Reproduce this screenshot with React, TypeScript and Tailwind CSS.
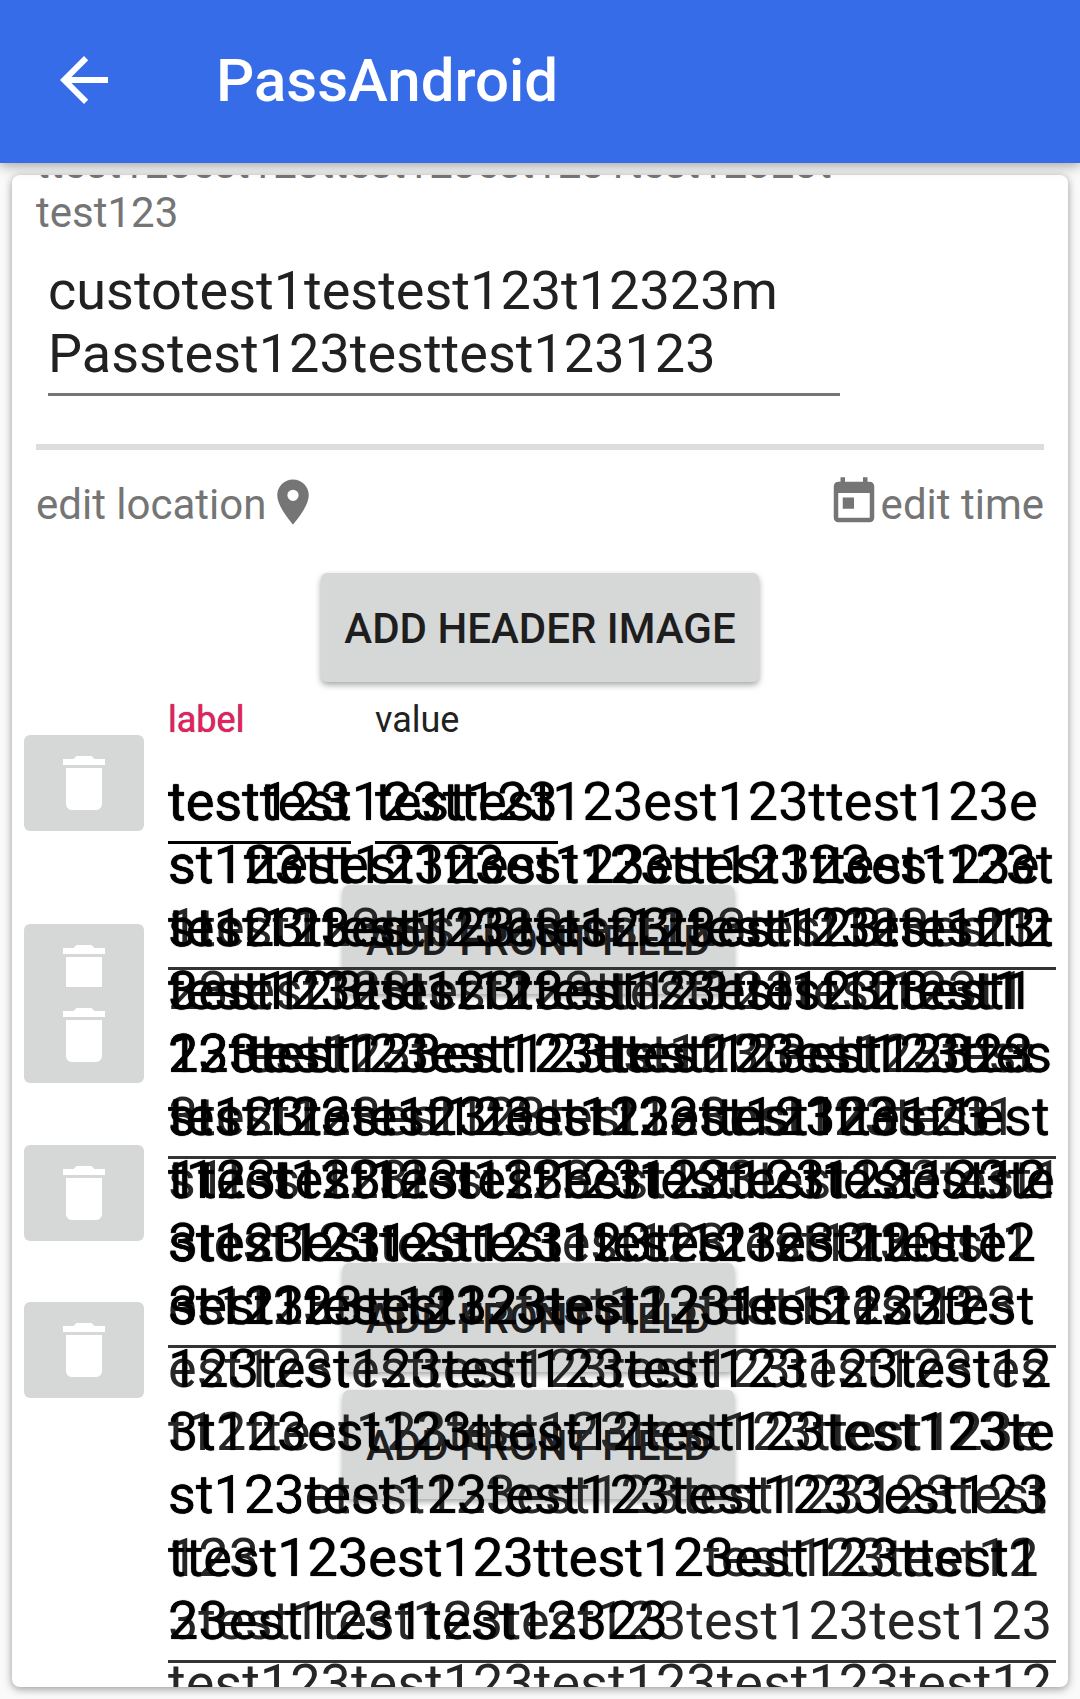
import React from "react";
import { MdArrowBack, MdDelete, MdPlace, MdToday } from "react-icons/md";

const ROBOTO = "font-['Roboto',sans-serif]";

const faintLines = [
  "",
  "",
  "1test123test123test123test123est1",
  "23test123test123ttest123test123t1",
  "23test123test123est123test123test",
  "3test123est123test123est123test1",
  "s1test123test123est123test123test1",
  "stest123test123est123test123test1",
  "est123test123test123test12est123t",
  "est123testtest123test123test123tes",
  "t12ttest123test123test123ttest123e",
  "st123etest123est123test123123test",
  "123t123est123ttest12test123test12",
  "3test1test123test123test123test123",
  "test123test123test123test123test12",
];

const secondLines = [
  "",
  "st1ttest123ttest123est123ttest123e",
  "st123ttest123est123ttest123est123t",
  "test123est123ttest123est123ttest1",
  "123test123est123ttest123est12323",
  "test123test123est123ttest123123",
  "1test123test123est123test123est12",
  "3test123test1231test123est123tte",
  "st123test12323test123test12323",
];

const firstLines = [
  "testtest123ttest123est123ttest123e",
  "st123ttest123est123ttest123est123t",
  "test123est123ttest123est123ttest12",
  "3est123ttest123est123ttest123est1",
  "23ttest123est123ttest123est123ttes",
  "st123test123test123est123ttest1est",
  "t123test123test123test123test123te",
  "st123est123test123test1233ttest12",
  "3est123test123test1231test123test",
  "123test123test123test123123test12",
  "3t123est123ttest12test123test123te",
  "st123test123test123test1233est123",
  "ttest123est123ttest123est123ttest1",
  "23est1231test12323",
];

function Layer({ label, lines, tone }: { label: string; lines: string[]; tone: string }) {
  return (
    <textarea
      aria-label={label}
      rows={15}
      wrap="off"
      spellCheck={false}
      defaultValue={lines.join("\n")}
      className={`col-start-1 row-start-1 block h-[945px] w-full resize-none overflow-hidden whitespace-pre bg-transparent p-0 text-[54px] leading-[63px] outline-none ${tone}`}
    />
  );
}

function DeleteButton({ place }: { place: string }) {
  return (
    <button
      type="button"
      aria-label="Delete field"
      className={`absolute left-3 flex h-24 w-[120px] items-center justify-center rounded-md bg-[#d6d7d7] text-white ${place}`}
    >
      <MdDelete className="size-18" />
    </button>
  );
}

function RaisedButton({ children, place }: { children: React.ReactNode; place: string }) {
  return (
    <button
      type="button"
      className={`h-[109px] rounded-md bg-[#d6d7d7] px-[23px] pt-[2px] text-[42px] leading-[49px] font-medium whitespace-nowrap text-[#1e1e1e] shadow-[0_3px_6px_rgba(0,0,0,0.35)] ${place}`}
    >
      {children}
    </button>
  );
}

function Rule({ place }: { place: string }) {
  return <div className={`absolute right-3 left-[156px] h-[3px] bg-[#333] ${place}`} />;
}

export default function App() {
  return (
    <div className={`flex h-screen flex-col overflow-hidden bg-[#fafafa] ${ROBOTO}`}>
      <header className="relative z-10 flex h-[163px] shrink-0 items-center bg-[#366ce8] pb-1 pl-12 text-white shadow-[0_3px_12px_rgba(0,0,0,0.35)]">
        <button type="button" aria-label="Back">
          <MdArrowBack className="size-18" />
        </button>
        <h1 className="ml-24 pt-[2px] text-[60px] leading-[70px] font-medium">PassAndroid</h1>
      </header>

      <main className="mx-3 mt-3 mb-3 flex min-h-0 flex-1 flex-col overflow-hidden rounded-lg bg-white shadow-[0_2px_8px_rgba(0,0,0,0.4)]">
        <div className="relative -mt-9 shrink-0">
          <div className="px-6">
            <label htmlFor="description" className="block text-[42px] leading-[49px] text-[#757575]">
              ttest123est123ttest123est1231test12323t
              <br />
              test123
            </label>
            <textarea
              id="description"
              rows={2}
              spellCheck={false}
              defaultValue={"custotest1testest123t12323m\nPasstest123testtest123123"}
              className="mt-[22px] ml-3 block h-[137px] w-[792px] resize-none overflow-hidden border-b-3 border-[#757575] p-0 text-[54px] leading-[63px] text-[#212121] outline-none"
            />
            <hr className="mt-12 h-[6px] border-0 bg-[#ddd]" />
            <div className="mt-[25px] flex items-center justify-between text-[42px] leading-[48px] text-[#757575]">
              <button type="button" className="flex items-center">
                <span className="pt-[6px]">edit location</span>
                <MdPlace className="size-[54px]" />
              </button>
              <button type="button" className="flex items-center">
                <MdToday className="size-[54px]" />
                <span className="pt-[6px]">edit time</span>
              </button>
            </div>
            <div className="mt-11 flex justify-center">
              <RaisedButton place="">ADD HEADER IMAGE</RaisedButton>
            </div>
          </div>

          <section className="relative mt-[17px]">
            <div className="flex pl-[156px] text-[36px] leading-[42px]">
              <label htmlFor="field-label" className="w-[207px] text-[#e91e63] [text-shadow:0_0_1px_#333]">
                label
              </label>
              <label htmlFor="field-value" className="text-[#212121]">
                value
              </label>
            </div>

            <DeleteButton place="top-9" />
            <DeleteButton place="top-[225px]" />
            <DeleteButton place="top-72" />
            <DeleteButton place="top-[446px]" />
            <DeleteButton place="top-[603px]" />

            <RaisedButton place="absolute top-[186px] left-[331px]">ADD FRONT FIELD</RaisedButton>
            <RaisedButton place="absolute top-[564px] left-[331px]">ADD FRONT FIELD</RaisedButton>
            <RaisedButton place="absolute top-[691px] left-[331px]">ADD FRONT FIELD</RaisedButton>

            <div className="relative mt-[29px] grid pl-[156px]">
              <Layer label="Back fields" lines={faintLines} tone="text-[#262626]" />
              <Layer label="Second front field" lines={secondLines} tone="text-black [text-shadow:0_0_1px_#000]" />
              <Layer label="First front field" lines={firstLines} tone="text-black [text-shadow:0_0_1px_#000]" />
              <div className="z-10 col-start-1 row-start-1 flex items-start gap-6 self-start">
                <input
                  id="field-label"
                  defaultValue="test123"
                  className="h-[74px] w-[183px] border-b-3 border-black pb-2 text-[54px] leading-[63px] outline-none [text-shadow:0_0_1px_#000]"
                />
                <input
                  id="field-value"
                  defaultValue="test123"
                  className="h-[74px] w-[183px] border-b-3 border-black pb-2 text-[54px] leading-[63px] outline-none [text-shadow:0_0_1px_#000]"
                />
              </div>
            </div>
            <Rule place="top-[268px]" />
            <Rule place="top-[457px]" />
            <Rule place="top-[646px]" />
            <Rule place="top-[961px]" />
          </section>
        </div>
      </main>
    </div>
  );
}
